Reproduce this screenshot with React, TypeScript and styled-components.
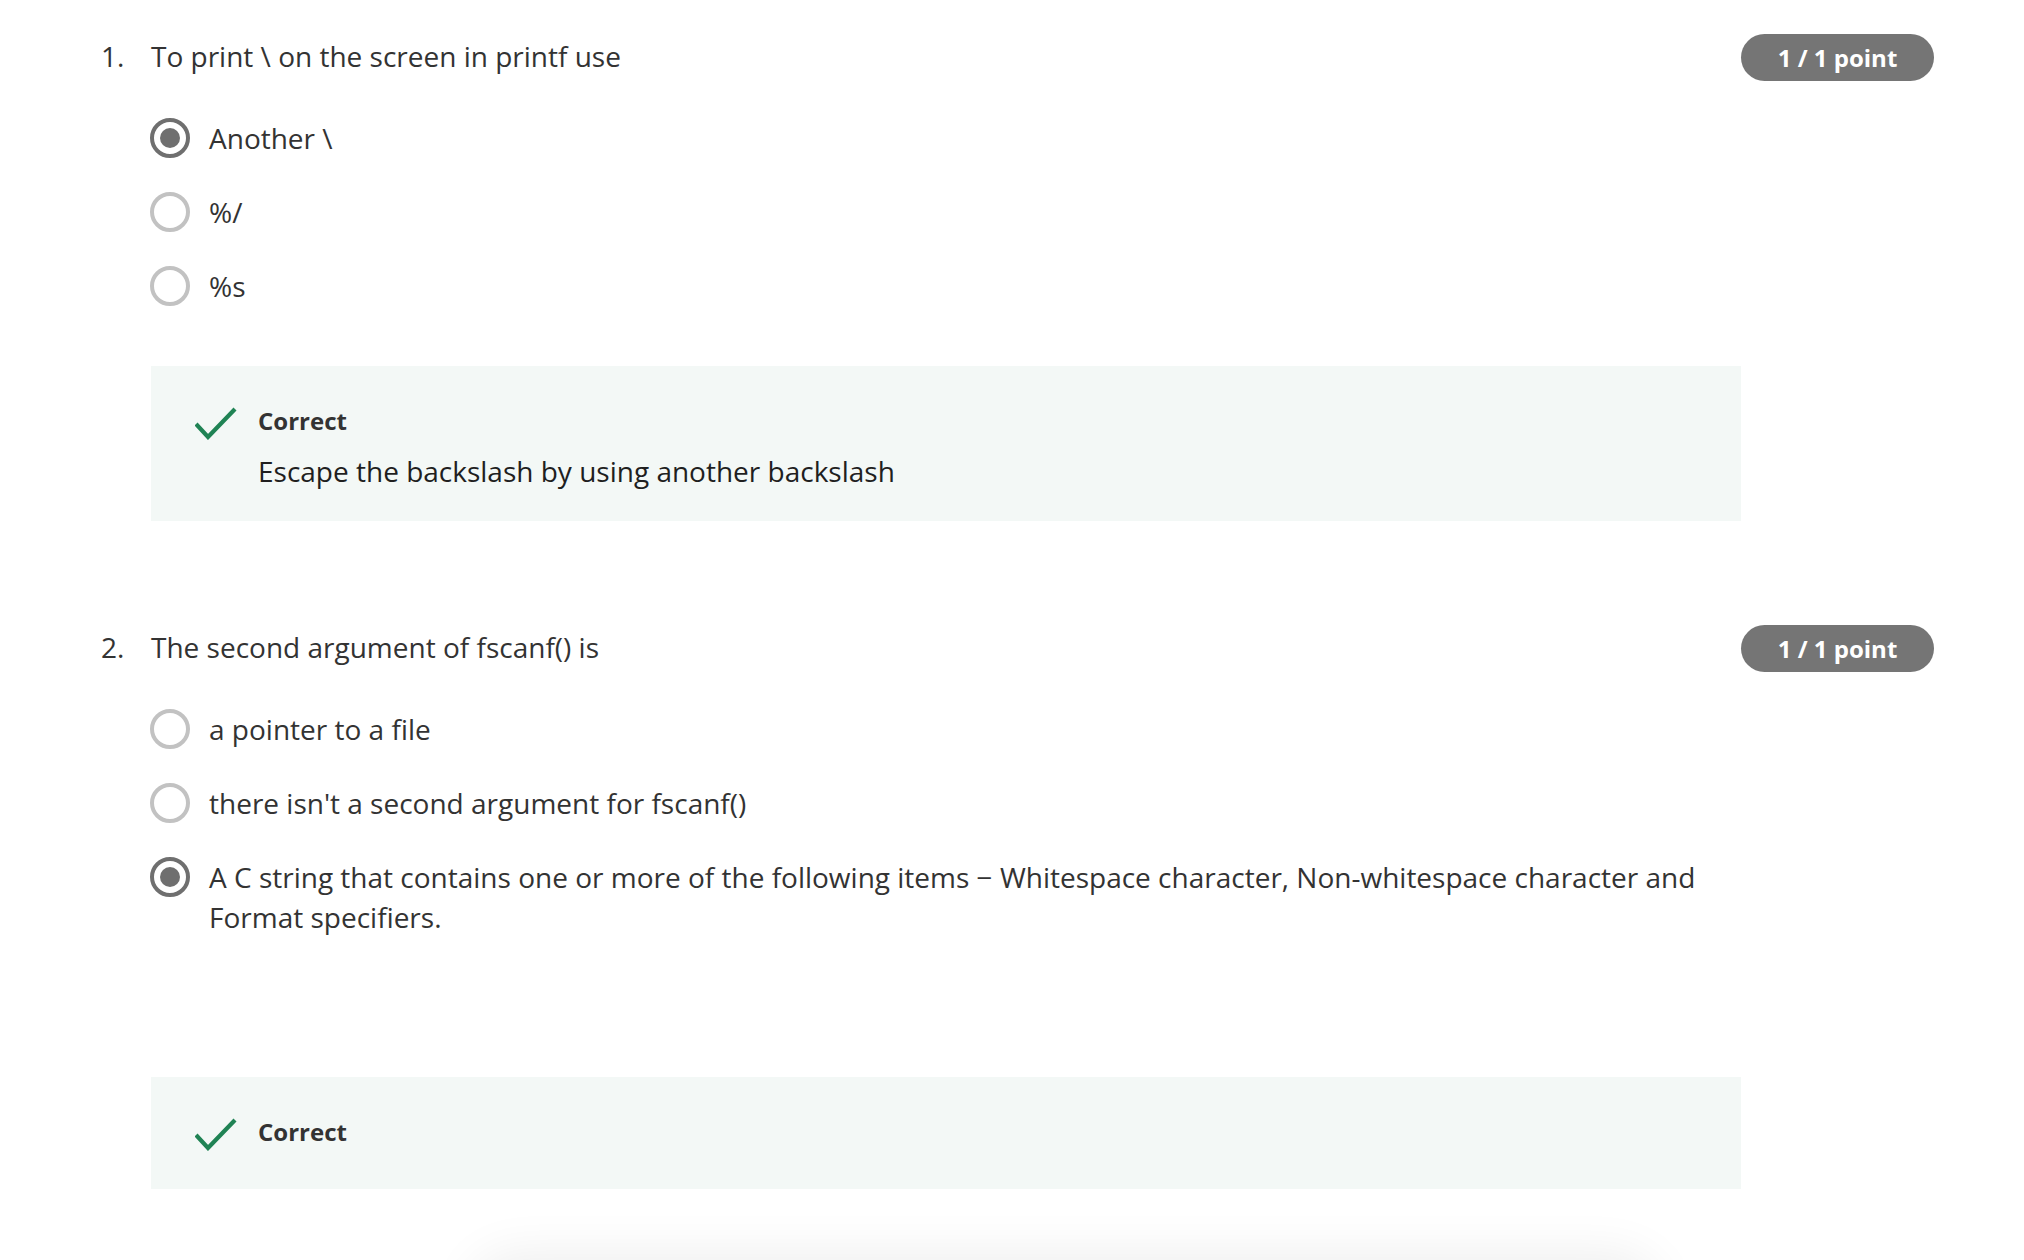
import React from "react";
import styled, { createGlobalStyle } from "styled-components";

const Global = createGlobalStyle`
  html, body { margin: 0; padding: 0; background: #ffffff; }
  body { font-family: "Open Sans", "Noto Sans", sans-serif; color: #333333; -webkit-font-smoothing: antialiased; }
`;

const Page = styled.main`
  padding: 34px 90px 0 101px;
  display: flex;
  flex-direction: column;
  gap: 104px;
`;

const Question = styled.section`
  display: grid;
  grid-template-columns: 50px 1590px 193px;
  grid-template-rows: auto auto;
`;

const Number = styled.div`
  grid-column: 1;
  grid-row: 1;
  align-self: center;
  margin-top: -4px;
  font-size: 28px;
  line-height: 40px;
  color: #333333;
`;

const Title = styled.h2`
  grid-column: 2;
  grid-row: 1;
  align-self: center;
  margin: -4px 0 0 0;
  font-size: 28px;
  line-height: 40px;
  font-weight: 400;
  color: #333333;
`;

const Badge = styled.div`
  grid-column: 3;
  grid-row: 1;
  height: 47px;
  border-radius: 24px;
  background: #757575;
  color: #ffffff;
  font-weight: 700;
  font-size: 24px;
  display: flex;
  align-items: center;
  justify-content: center;
`;

const Body = styled.div`
  grid-column: 2;
  grid-row: 2;
  display: flex;
  flex-direction: column;
`;

const Options = styled.div`
  margin-top: 37px;
  display: flex;
  flex-direction: column;
  gap: 34px;
`;

const Option = styled.label`
  display: flex;
  align-items: flex-start;
  gap: 19px;
  margin-left: -1px;
  cursor: pointer;
`;

const Radio = styled.span<{ $checked?: boolean }>`
  flex: 0 0 auto;
  box-sizing: border-box;
  width: 40px;
  height: 40px;
  border-radius: 50%;
  border: 4px solid ${(p) => (p.$checked ? "#6f6f6f" : "#c2c2c2")};
  display: flex;
  align-items: center;
  justify-content: center;
  &::after {
    content: "";
    display: ${(p) => (p.$checked ? "block" : "none")};
    width: 20px;
    height: 20px;
    border-radius: 50%;
    background: #6f6f6f;
  }
`;

const OptionText = styled.span`
  font-size: 28px;
  line-height: 40px;
  color: #333333;
  padding-right: 30px;
`;

const Feedback = styled.div<{ $gap: number; $bottom: number }>`
  margin-top: ${(p) => p.$gap}px;
  background: #f3f8f6;
  padding: 40px 40px ${(p) => p.$bottom}px 42px;
  display: grid;
  grid-template-columns: 42px 1fr;
  column-gap: 23px;
  row-gap: 11px;
`;

const CheckIcon = styled.svg`
  grid-column: 1;
  grid-row: 1;
  width: 42px;
  height: 34px;
  align-self: center;
  margin-left: 2px;
`;

const FeedbackLabel = styled.div`
  grid-column: 2;
  grid-row: 1;
  font-size: 24px;
  line-height: 30px;
  font-weight: 700;
  color: #333333;
`;

const FeedbackText = styled.div`
  grid-column: 2;
  grid-row: 2;
  font-size: 28px;
  line-height: 40px;
  color: #1f1f1f;
`;

const BottomShadow = styled.div`
  position: fixed;
  left: 470px;
  width: 1190px;
  bottom: -90px;
  height: 90px;
  border-radius: 45px;
  background: #ffffff;
  box-shadow: 0 -6px 50px rgba(0, 0, 0, 0.07);
`;

const Check = () => (
  <CheckIcon viewBox="0 0 42 34" fill="none">
    <polyline points="1,18 13,31 40,3" stroke="#1f8354" strokeWidth="4.2" strokeLinejoin="miter" />
  </CheckIcon>
);

type Q = {
  n: string;
  title: string;
  options: { text: string; checked?: boolean }[];
  explanation?: string;
  gap: number;
  bottom: number;
};

const questions: Q[] = [
  {
    n: "1.",
    title: "To print \\ on the screen in printf use",
    options: [{ text: "Another \\", checked: true }, { text: "%/" }, { text: "%s" }],
    explanation: "Escape the backslash by using another backslash",
    gap: 60,
    bottom: 30,
  },
  {
    n: "2.",
    title: "The second argument of fscanf() is",
    options: [
      { text: "a pointer to a file" },
      { text: "there isn't a second argument for fscanf()" },
      {
        text: "A C string that contains one or more of the following items \u2212 Whitespace character, Non-whitespace character and Format specifiers.",
        checked: true,
      },
    ],
    gap: 140,
    bottom: 38,
  },
];

export default function App() {
  return (
    <>
      <Global />
      <Page>
        {questions.map((q) => (
          <Question key={q.n}>
            <Number>{q.n}</Number>
            <Title>{q.title}</Title>
            <Badge>1 / 1 point</Badge>
            <Body>
              <Options>
                {q.options.map((o) => (
                  <Option key={o.text}>
                    <Radio $checked={o.checked} />
                    <OptionText>{o.text}</OptionText>
                  </Option>
                ))}
              </Options>
              <Feedback $gap={q.gap} $bottom={q.bottom}>
                <Check />
                <FeedbackLabel>Correct</FeedbackLabel>
                {q.explanation && <FeedbackText>{q.explanation}</FeedbackText>}
              </Feedback>
            </Body>
          </Question>
        ))}
      </Page>
      <BottomShadow />
    </>
  );
}
